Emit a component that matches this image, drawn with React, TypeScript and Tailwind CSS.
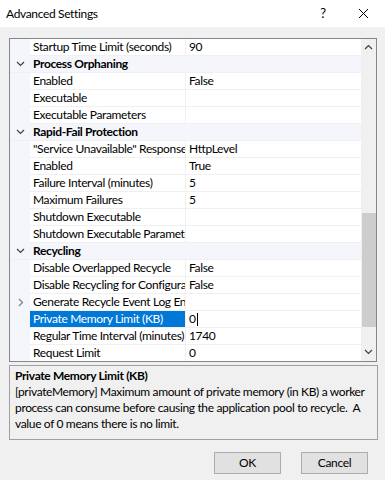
type Row =
  | { kind: "cat"; label: string }
  | { kind: "prop"; label: string; value?: string; expandable?: boolean; selected?: boolean };

const rows: Row[] = [
  { kind: "prop", label: "Startup Time Limit (seconds)", value: "90" },
  { kind: "cat", label: "Process Orphaning" },
  { kind: "prop", label: "Enabled", value: "False" },
  { kind: "prop", label: "Executable" },
  { kind: "prop", label: "Executable Parameters" },
  { kind: "cat", label: "Rapid-Fail Protection" },
  { kind: "prop", label: "\"Service Unavailable\" Response Type", value: "HttpLevel" },
  { kind: "prop", label: "Enabled", value: "True" },
  { kind: "prop", label: "Failure Interval (minutes)", value: "5" },
  { kind: "prop", label: "Maximum Failures", value: "5" },
  { kind: "prop", label: "Shutdown Executable" },
  { kind: "prop", label: "Shutdown Executable Parameters" },
  { kind: "cat", label: "Recycling" },
  { kind: "prop", label: "Disable Overlapped Recycle", value: "False" },
  { kind: "prop", label: "Disable Recycling for Configuration Changes", value: "False" },
  { kind: "prop", label: "Generate Recycle Event Log Entry", expandable: true },
  { kind: "prop", label: "Private Memory Limit (KB)", value: "0", selected: true },
  { kind: "prop", label: "Regular Time Interval (minutes)", value: "1740" },
  { kind: "prop", label: "Request Limit", value: "0" },
];

function Chevron({ dir }: { dir: "down" | "right" | "up" }) {
  const pts =
    dir === "down" ? "1,2 4.5,5.5 8,2" : dir === "up" ? "1,6 4.5,2.5 8,6" : "3,1 6.5,4.5 3,8";
  return (
    <svg width="9" height="9" viewBox="0 0 9 9" className="shrink-0">
      <polyline points={pts} fill="none" stroke={dir === "right" ? "#808080" : "#404040"} strokeWidth="1.2" />
    </svg>
  );
}

function GridRow({ row }: { row: Row }) {
  if (row.kind === "cat") {
    return (
      <div className="h-[17px] flex items-center bg-[#f4f6fb] border-b border-[#eef0f5]">
        <div className="w-[20px] flex justify-center pl-[1px]">
          <Chevron dir="down" />
        </div>
        <div className="pl-[3px] font-bold whitespace-nowrap">{row.label}</div>
      </div>
    );
  }
  return (
    <div className="h-[17px] flex items-stretch bg-[#f4f6fb]">
      <div className="w-[20px] flex items-center justify-center pl-[1px]">
        {row.expandable && <Chevron dir="right" />}
      </div>
      <div
        className={`w-[155px] pl-[3px] flex items-center overflow-hidden whitespace-nowrap border-b border-[#f0f0f0] ${
          row.selected ? "bg-[#0078d7] text-white" : "bg-white"
        }`}
      >
        {row.label}
      </div>
      <div className="w-px bg-[#f0f0f0]" />
      <div className="flex-1 bg-white pl-[3px] flex items-center overflow-hidden whitespace-nowrap border-b border-[#f0f0f0]">
        {row.value}
        {row.selected && <span className="w-px h-[13px] bg-black ml-[1px]" />}
      </div>
    </div>
  );
}

export default function App() {
  return (
    <div
      className="w-[385px] h-[480px] bg-[#f0f0f0] flex flex-col text-[12px] tracking-[-0.35px] text-black overflow-hidden"
      style={{ fontFamily: 'Lato, "Noto Sans", sans-serif' }}
    >
      <div className="h-[27px] bg-white flex items-center pl-[6px]">
        <span className="flex-1">Advanced Settings</span>
        <span className="w-[40px] text-center text-[13px]">?</span>
        <span className="w-[42px] flex justify-center pr-[2px]">
          <svg width="11" height="11" viewBox="0 0 11 11">
            <path d="M1 1L10 10M10 1L1 10" stroke="#000" strokeWidth="1" />
          </svg>
        </span>
      </div>

      <div className="px-[9px] pt-[11px] pr-[8px]">
        <div className="h-[324px] border border-[#828790] bg-white flex overflow-hidden">
          <div className="flex-1 flex flex-col overflow-hidden">
            {rows.map((r, i) => (
              <GridRow key={i} row={r} />
            ))}
          </div>
          <div className="w-[15px] bg-[#f0f0f0] flex flex-col">
            <div className="h-[17px] flex items-center justify-center">
              <Chevron dir="up" />
            </div>
            <div className="h-[157px]" />
            <div className="h-[114px] bg-[#cdcdcd] ml-[1px]" />
            <div className="flex-1" />
            <div className="h-[17px] flex items-center justify-center">
              <Chevron dir="down" />
            </div>
          </div>
        </div>
      </div>

      <div className="px-[9px] pr-[7px] pt-[3px]">
        <div className="h-[75px] border border-[#a0a0a0] px-[5px] pt-[2px] leading-[16px]">
          <div className="font-bold">Private Memory Limit (KB)</div>
          <div>
            [privateMemory] Maximum amount of private memory (in KB) a worker process can consume before causing the
            application pool to recycle.&nbsp; A value of 0 means there is no limit.
          </div>
        </div>
      </div>

      <div className="flex justify-end gap-[20px] pt-[12px] pr-[17px]">
        <button className="w-[67px] h-[22px] bg-[#e1e1e1] border border-[#adadad]">OK</button>
        <button className="w-[67px] h-[22px] bg-[#e1e1e1] border border-[#adadad]">Cancel</button>
      </div>
    </div>
  );
}
